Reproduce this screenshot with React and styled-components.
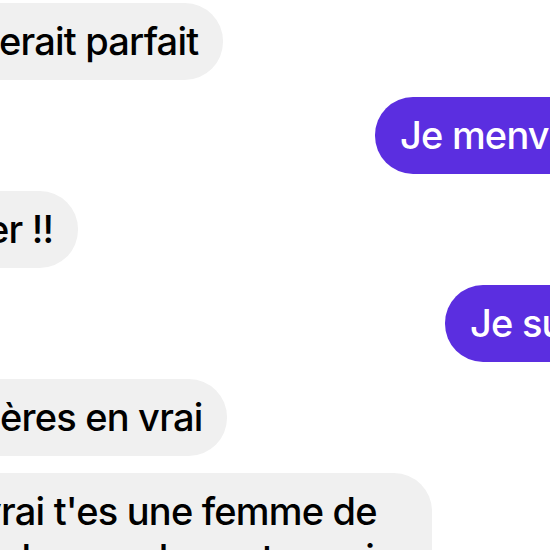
import React from 'react';
import styled, { createGlobalStyle } from 'styled-components';

// the screenshot is a crop of a wider chat, so bubbles run off both edges
const messages = [
    { from: 'them', shift: -1, text: 'erait parfait' },
    { from: 'me', shift: 375, text: 'Je menvie trop de toi' },
    { from: 'them', shift: -13, text: 'er !!' },
    { from: 'me', shift: 445, text: 'Je suis trop contente' },
    { from: 'them', shift: 0, text: 'ères en vrai' },
    { from: 'them', shift: -20, wide: true, text: "vrai t'es une femme de valeur, on le sent aussi dans ta façon de parler" },
];

const App = () => {
    return (
        <>
            <GlobalStyle />
            <Thread>
                {messages.map((m, i) => (
                    <Row key={i}>
                        <Bubble $from={m.from} $shift={m.shift} $wide={m.wide}>{m.text}</Bubble>
                    </Row>
                ))}
            </Thread>
        </>
    )
}

export default App;

const GlobalStyle = createGlobalStyle`
    html, body {
        margin: 0;
        padding: 0;
        background: #ffffff;
    }
`;

const Thread = styled.div`
    width: 550px;
    height: 550px;
    overflow: hidden;
    display: flex;
    flex-direction: column;
    gap: 17px;
    padding-top: 3px;
    box-sizing: border-box;
    font-family: 'Inter', 'Liberation Sans', sans-serif;
`;

const Row = styled.div`
    display: flex;
    justify-content: flex-start;
`;

const Bubble = styled.div`
    flex-shrink: 0;
    box-sizing: border-box;
    font-size: 38px;
    font-weight: 500;
    line-height: 47px;
    letter-spacing: -0.8px;
    padding: 15px 25px 15px ${props => props.$from === 'me' ? '25px' : '40px'};
    margin-left: ${props => props.$from === 'me' ? props.$shift : props.$shift - 40}px;
    border-radius: 38px;
    white-space: ${props => props.$wide ? 'normal' : 'nowrap'};
    width: ${props => props.$wide ? `${432 - props.$shift + 40}px` : 'auto'};
    background-color: ${props => props.$from === 'me' ? '#5b2ee0' : '#f0f0f0'};
    color: ${props => props.$from === 'me' ? '#ffffff' : '#000000'};
`;
